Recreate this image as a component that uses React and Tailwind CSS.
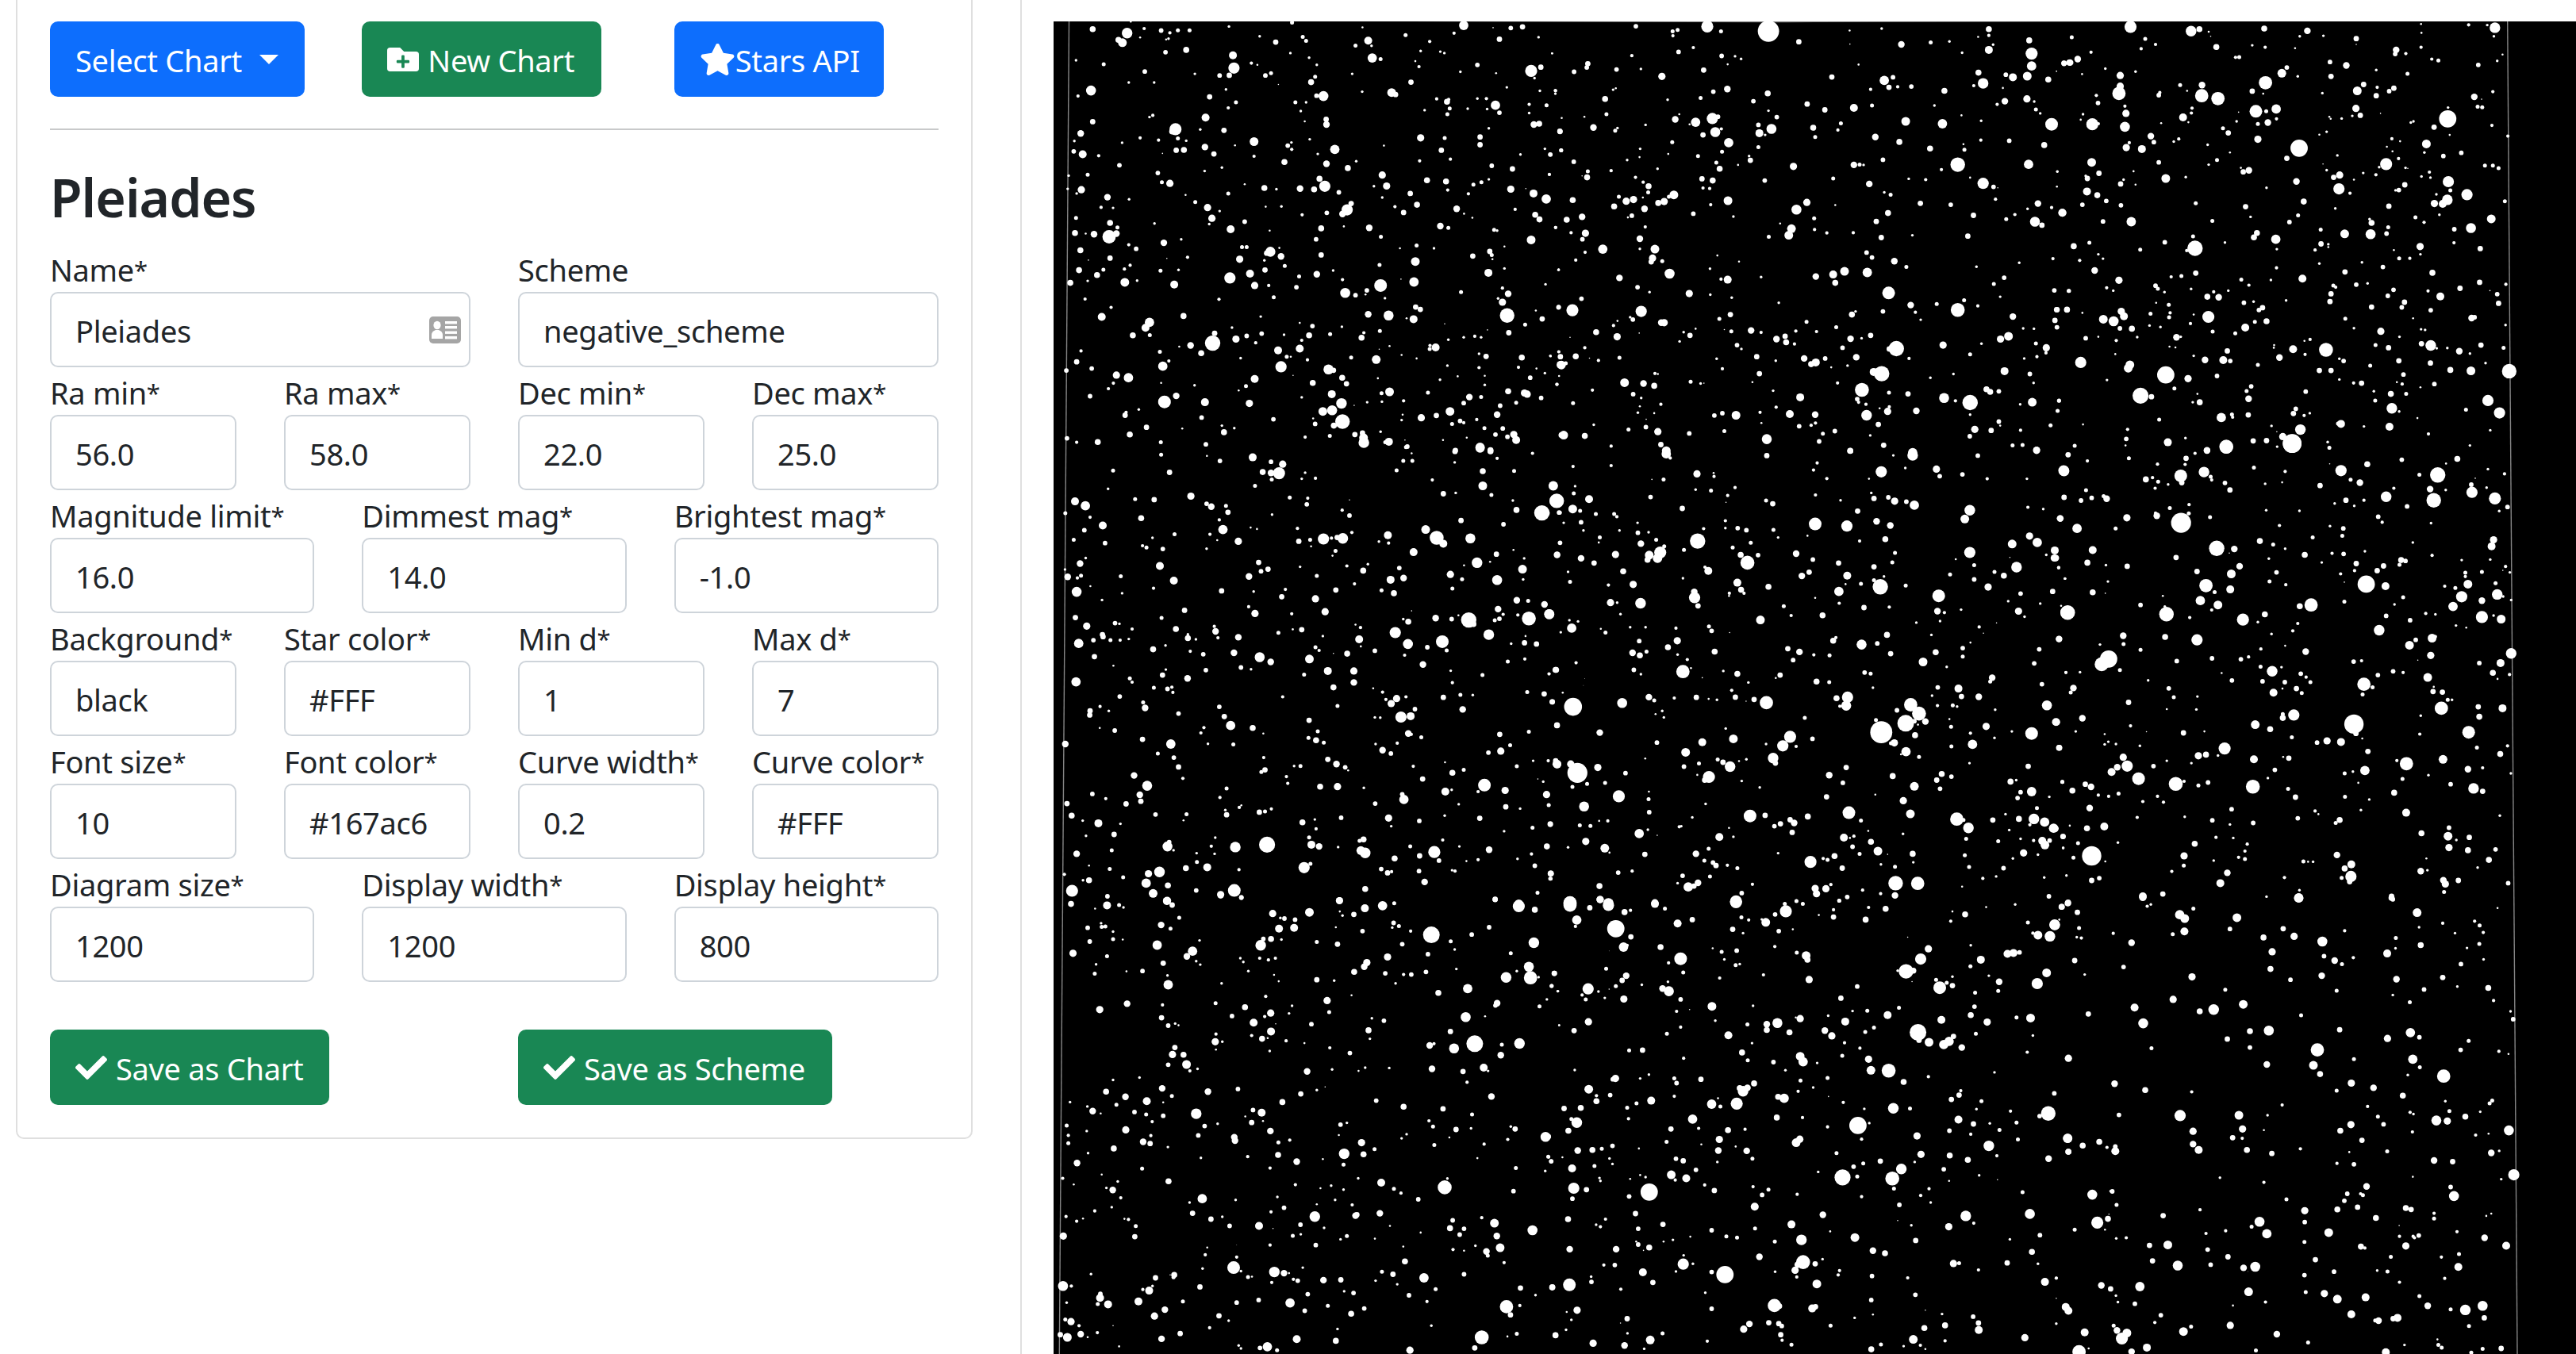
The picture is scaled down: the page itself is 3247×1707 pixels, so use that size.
import React from "react";
import { FaFolderPlus, FaStar, FaCheck } from "react-icons/fa";

// Star catalogue, split in sky tiles. Each star is a triple: x, y, radius.
const W = 1568;
const TILES = [
  { x: 1310, y: 0, w: 660, h: 570, stars: [
    263,115,16,237,138,9,249,148,13,160,101,9,314,99,5,365,106,7,391,114,5,415,105,6,450,105,6,387,134,4,380,137,3,302,130,3,378,181,7,440,173,9,110,209,4,193,223,6,316,248,7,268,286,4,344,286,4,155,314,15,116,333,5,160,422,8,124,463,10,105,489,4,103,525,7,130,535,12,178,540,5,248,495,4,302,478,5,340,400,5,330,406,4,357,486,5,408,448,18,398,456,9,415,480,6,440,488,4,410,521,8,433,520,9,369,532,2,240,573,7,355,600,7,145,606,6,88,609,4,85,655,4,126,658,11,112,671,4,367,632,6,391,636,11,204,684,10,185,719,5,221,721,4,269,691,4,110,756,6,212,773,9,234,789,6,209,821,20,231,810,10,164,812,10,107,808,9,139,810,3,345,775,4,373,842,10,425,830,4,268,849,5,290,863,7,123,868,9,147,902,2,212,895,8,272,920,5,255,933,5,192,935,6,119,937,9,173,954,9,145,974,4,256,979,13,293,973,4,93,981,9,363,939,6,417,936,4,444,892,5,382,896,2,404,987,12,137,1037,5,215,1066,5,187,1099,12,432,1096,9,330,1118,14,318,1137,12,331,1162,6,280,1163,9,125,1217,5,112,1255,8,157,1278,7,81,1285,7,231,1301,11,267,1310,14,222,1329,5,207,1348,5,152,1374,7,370,1270,14,388,1252,5,361,1220,6,419,1202,3,453,1198,10,365,1328,3,375,1394,19,410,1373,10,298,1420,4,257,1440,8,260,1430,5,321,1482,8,271,1507,9,83,1520,7,112,1534,5,175,1533,9,364,1534,6,428,1486,3,
    274,75,3,568,92,4,757,78,6,660,126,4,708,146,8,789,128,6,799,142,6,580,192,12,583,236,17,569,261,8,540,262,7,635,219,5,653,225,3,694,254,6,677,262,7,752,184,4,808,200,4,831,225,4,826,266,6,814,285,9,716,293,2,466,256,4,510,336,8,559,310,4,589,355,6,566,374,5,498,408,12,553,452,8,482,449,4,496,510,10,523,534,8,586,504,3,643,491,13,643,542,5,547,581,4,495,593,4,851,333,15,830,332,7,767,355,6,799,355,4,783,385,4,795,421,3,859,414,8,860,432,10,744,505,7,755,494,4,756,518,5,810,483,4,834,534,4,734,562,9,885,518,14,860,568,10,924,583,9,949,559,4,839,620,9,855,646,17,823,657,9,897,667,7,781,654,10,674,652,9,710,656,4,615,639,3,566,671,6,438,676,3,467,701,6,504,720,11,540,732,4,517,757,11,509,777,4,615,769,7,573,795,12,678,717,3,725,716,4,787,745,5,861,738,7,934,706,8,922,728,17,908,742,10,844,792,9,912,785,3,829,830,7,690,800,3,607,857,6,621,857,6,600,899,11,692,873,15,681,878,8,719,860,3,724,889,10,735,922,6,674,903,4,676,936,8,844,884,8,880,938,4,831,951,10,778,959,6,770,996,7,571,964,17,631,949,12,645,990,11,687,990,5,702,1031,6,538,1038,5,663,1098,4,577,1136,4,525,1156,8,519,1190,23,485,1225,9,589,1176,11,621,1165,7,666,1157,7,648,1189,5,733,1161,4,715,1215,12,780,1209,12,786,1180,5,808,1163,9,818,1131,7,780,1120,3,724,1272,17,741,1237,6,753,1237,3,803,1248,5,603,1242,4,465,1336,4,645,1314,12,619,1339,6,597,1354,3,496,1395,12,629,1399,11,760,1302,2,786,1378,4,819,1328,9,486,1448,7,701,1454,7,547,1476,4,553,1499,9,584,1485,4,499,1541,7,796,1516,5,826,1470,7,820,1451,3,
    968,95,3,985,141,12,995,159,4,947,158,6,997,201,14,1022,205,6,1097,122,6,1142,177,4,1169,144,5,1137,231,5,1126,212,3,937,256,4,1113,285,8,967,318,4,1055,321,13,1067,328,8,1271,88,14,1242,115,5,1201,179,4,1213,184,4,1261,249,4,1312,225,7,1359,96,2,1378,136,8,1412,97,7,1447,93,8,1495,129,4,1536,185,3,1473,246,18,1502,233,8,1483,271,4,1368,254,3,1400,303,4,1499,315,4,1546,315,5,1366,365,14,1378,391,7,1339,342,5,1312,342,4,1341,378,4,1190,343,5,1221,353,9,1226,345,5,1229,376,6,1222,396,6,1154,382,4,1283,377,4,1467,362,5,1467,392,4,1519,365,6,1481,432,10,1497,429,9,1559,455,8,1346,445,4,1320,475,8,1320,502,8,1214,479,6,1142,478,11,1204,521,8,1231,552,5,1139,558,5,1032,505,3,1441,536,4,1514,516,4,1530,536,6,1563,521,6,1355,575,7,1417,586,8,1528,605,4,1027,607,11,1040,645,11,1002,646,4,1161,625,9,1111,671,8,1131,710,9,1091,737,8,1065,717,5,1027,685,4,1218,629,9,1223,659,5,1300,640,6,1324,632,6,1346,622,4,1285,672,5,1250,724,10,1272,741,3,1297,755,3,1412,656,11,1425,726,5,1457,654,2,1480,671,12,1518,690,14,1485,745,9,1498,761,9,1546,789,5,1473,832,13,1393,855,3,1362,797,6,1371,800,4,1201,784,10,1225,790,6,988,790,10,1023,821,6,1130,851,6,1080,861,3,1182,861,4,1126,907,13,1122,978,14,1083,968,2,1019,919,6,1298,888,8,1349,872,8,1355,884,6,1357,899,3,1345,946,12,1393,931,4,1022,990,19,981,1007,7,977,1021,3,947,1024,7,916,1016,15,908,970,5,1035,1034,4,985,1090,10,1046,1094,15,1127,1065,8,1141,1073,8,1121,1107,12,1100,1104,3,906,1133,4,1020,1148,6,972,1154,5,965,1171,9,871,1159,6,1009,1247,13,934,1240,6,1018,1211,2,1049,1200,3,1085,1231,3,1130,1243,3,1263,1013,6,1404,1019,10,1387,999,5,1387,1048,11,1374,1035,4,1401,1094,22,1455,1126,6,1406,1154,8,1506,1106,8,1487,1077,3,1555,1066,7,1516,986,4,1555,936,4,1214,1123,2,1342,1144,2,1225,1178,4,1187,1205,12,1169,1210,6,1170,1198,5,1271,1170,4,1304,1166,5,1323,1170,4,1317,1227,4,1338,1236,8,1317,1275,5,1222,1268,4,1445,1240,9,1435,1274,5,1489,1278,3,1531,1235,4,1561,1237,7,1561,1265,12,1556,1220,5,1514,1294,4,1470,1310,7,1334,1303,3,1334,1335,4,1253,1305,3,1200,1317,4,1164,1362,6,1049,1359,13,1025,1364,6,1014,1312,3,982,1395,4,1026,1393,4,1091,1390,5,943,1406,2,866,1281,15,881,1284,8,907,1310,9,920,1331,8,876,1367,12,905,1399,16,877,1423,15,849,1427,13,908,1462,22,882,1476,9,945,1507,8,968,1502,8,972,1535,16,971,1518,13,1022,1497,4,1047,1532,12,1036,1534,6,870,1512,6,1085,1457,4,1088,1438,3,1144,1449,11,1189,1441,8,1230,1427,13,1288,1377,10,1271,1398,7,1323,1377,6,1404,1357,9,1453,1363,11,1461,1367,11,1503,1380,7,1428,1397,6,1380,1407,7,1371,1438,10,1310,1455,5,1388,1486,7,1366,1507,7,1421,1507,11,1428,1526,12,1402,1515,7,1333,1485,6,1260,1460,7,1271,1466,5,1236,1470,6,1320,1551,14,1351,1561,9,1246,1562,8,1209,1526,3,1280,1518,3,1098,1551,6,1095,1526,2,1564,1509,9,1550,1333,5] },
  { x: 1950, y: 0, w: 660, h: 570, stars: [
    266,91,7,376,109,6,391,104,6,377,124,5,480,92,18,521,109,6,663,108,32,754,145,8,438,165,5,394,180,7,523,194,7,563,195,4,581,204,4,541,223,3,254,193,5,281,239,4,208,241,7,122,221,8,119,234,7,81,249,7,15,185,3,25,314,5,25,325,4,174,343,9,178,396,6,198,311,4,206,306,3,344,265,11,469,243,8,540,309,10,498,318,7,460,340,6,361,346,4,112,405,3,139,442,10,44,409,3,39,456,8,42,521,6,10,536,7,80,561,7,7,605,5,295,433,4,211,444,4,204,453,6,384,414,10,396,396,3,445,424,14,427,431,3,495,411,17,512,405,7,504,458,15,522,447,5,467,468,8,375,493,6,544,495,14,524,526,6,452,541,6,363,534,3,279,516,4,277,545,3,240,555,4,192,592,5,331,585,4,265,615,5,288,632,5,304,646,9,303,667,6,122,594,6,120,615,9,105,610,2,464,620,8,496,626,9,517,585,9,507,564,6,572,572,3,605,541,4,609,556,8,467,652,5,487,654,5,652,626,7,542,696,13,490,710,5,438,741,7,558,751,4,380,676,13,365,682,6,351,699,11,333,704,9,259,692,11,237,698,11,215,682,6,292,724,10,287,685,3,201,716,9,254,748,7,242,754,3,77,694,9,105,752,10,59,762,9,294,787,5,278,828,10,278,863,4,323,864,13,316,895,11,312,908,8,345,906,6,367,949,15,26,789,5,72,807,5,115,809,11,106,830,7,167,864,14,114,875,5,86,902,5,35,935,4,217,964,10,271,996,7,307,1013,4,426,1018,11,489,1022,4,553,1032,4,521,968,5,541,970,12,488,932,4,510,886,3,575,907,3,641,961,4,694,1050,4,76,1076,18,35,1065,7,103,1036,7,282,1080,17,257,1108,7,249,1100,4,211,1113,3,342,1119,10,351,1119,11,199,1129,5,147,1152,9,210,1168,11,276,1155,2,69,1170,2,113,1206,5,86,1236,9,40,1237,8,35,1220,4,10,1234,4,43,1266,13,56,1260,6,154,1250,5,127,1242,2,217,1241,6,36,1304,3,30,1333,5,136,1353,5,409,1152,4,445,1140,3,428,1163,8,397,1184,4,516,1106,6,549,1091,8,531,1143,2,552,1149,6,611,1146,10,641,1153,5,569,1197,7,582,1210,4,508,1244,4,525,1279,5,628,1237,8,685,1251,4,636,1296,8,323,1295,5,332,1297,3,232,1327,13,289,1330,10,321,1338,9,258,1367,7,282,1380,4,278,1409,3,272,1431,4,321,1433,3,341,1402,5,430,1324,6,460,1330,4,470,1329,2,615,1325,3,677,1355,4,78,1398,6,140,1473,4,244,1490,6,297,1454,2,296,1481,7,332,1497,11,341,1542,8,50,1509,13,113,1512,9,192,1547,5,426,1503,7,501,1441,7,525,1433,7,566,1440,13,531,1495,6,638,1430,5,642,1467,3,686,1412,5,658,1523,15,357,1563,13,
    618,351,7,661,324,9,663,384,4,688,406,7,672,447,15,633,433,7,636,462,12,653,468,4,633,510,6,738,577,11,779,361,8,832,381,8,853,267,8,797,443,9,803,475,6,880,428,6,871,451,5,906,106,3,1002,99,4,907,153,2,933,224,3,1061,154,10,1149,147,6,1205,144,4,1243,183,4,1291,128,3,1323,101,9,1323,123,5,1336,155,4,1323,173,12,1444,140,9,1451,186,18,1451,229,14,1438,264,13,1395,268,12,1374,259,7,1365,305,3,1501,276,9,1548,219,8,1564,217,9,1526,247,2,1010,279,14,1036,268,7,1024,303,8,1050,301,5,1091,300,7,969,310,5,973,366,6,919,374,12,1190,315,9,1160,366,4,1292,252,9,1306,289,16,1278,297,5,1371,351,10,1348,362,5,1437,343,11,1459,352,4,1464,380,6,1477,393,4,1511,431,19,1489,503,9,1384,488,7,1300,419,4,1241,400,3,1299,486,5,1184,429,14,1074,421,13,1055,492,9,983,475,10,1147,515,9,1247,500,3,1250,519,6,1230,571,22,1181,588,5,1306,636,17,1267,616,3,1337,648,7,1350,651,2,1442,570,14,1528,595,4,1527,647,3,919,572,10,936,571,6,948,572,4,1006,554,7,857,619,6,965,638,10,1083,620,4,1134,623,5,1010,667,4,1029,675,6,1343,691,5,1118,705,8,1209,710,7,778,702,11,863,711,3,747,727,15,800,757,6,801,796,5,838,808,5,732,793,13,724,816,13,698,775,3,664,821,6,917,807,5,986,768,8,1021,739,9,1001,824,8,1094,816,4,1277,747,8,1260,819,8,1375,760,6,1401,744,5,1439,724,4,1470,706,10,1511,720,5,1461,769,15,1482,781,8,1543,738,12,957,876,7,973,893,7,1040,906,10,1076,926,6,959,945,14,891,941,13,857,952,12,863,981,9,805,959,10,1023,1016,19,1089,1058,10,1103,1083,5,1119,1109,4,1006,1080,7,1167,1054,6,1230,1075,21,1249,1041,6,1290,1061,5,1286,925,4,1414,911,4,1515,897,5,1369,963,7,1338,985,6,1357,1029,4,1519,1007,7,1562,1009,6,1526,1074,8,1557,1074,9,1521,1111,8,1527,1135,7,1395,1098,10,1426,1139,4,1458,1140,4,913,1091,9,924,1080,4,777,1116,6,866,1135,6,745,1148,5,807,1150,5,713,1166,8,687,1176,10,716,1187,9,741,1193,5,909,1175,10,885,1206,7,942,1173,4,969,1163,8,1046,1209,23,1025,1210,8,770,1243,10,833,1243,7,805,1257,12,791,1263,9,851,1274,3,926,1239,10,900,1268,4,1084,1243,5,1186,1197,11,1267,1229,6,1301,1192,4,1358,1176,11,1382,1166,13,1464,1191,6,1495,1206,11,1494,1224,5,1467,1237,5,1429,1243,4,1370,1287,12,1446,1297,7,1457,1328,4,1217,1297,4,1148,1310,4,1002,1296,23,978,1290,12,943,1352,21,929,1384,7,933,1395,5,955,1402,5,870,1328,5,1024,1362,6,1081,1366,8,758,1378,12,1189,1380,15,1223,1390,5,1267,1396,23,1267,1438,4,1316,1350,9,1327,1359,9,1353,1357,7,1453,1395,13,1417,1402,4,1533,1390,6,1529,1425,6,727,1436,12,803,1438,10,755,1478,7,804,1467,5,791,1475,5,862,1495,7,826,1504,6,815,1531,7,957,1440,16,1020,1427,11,1025,1411,5,996,1416,3,1106,1425,10,992,1472,8,968,1510,4,1008,1544,8,1353,1462,7,1357,1476,3,1281,1489,11,1266,1513,7,1330,1493,8,1418,1492,5,1508,1475,6,1394,1545,6,1424,1543,6,1466,1560,10,1095,1570,14,908,1563,9] },
  { x: 2590, y: 0, w: 657, h: 570, stars: [
    228,93,18,51,129,6,272,135,6,303,154,5,260,169,5,109,181,5,69,205,10,46,217,10,28,220,8,5,247,2,82,257,3,152,238,4,243,248,4,410,108,16,435,101,9,463,110,3,469,126,2,486,163,9,594,157,4,630,99,9,633,164,5,723,167,3,737,126,4,760,107,10,808,124,4,907,134,8,907,154,2,555,198,6,544,199,5,698,234,7,683,254,13,731,265,4,634,287,20,594,316,8,627,325,3,197,262,11,197,299,11,193,324,20,125,331,5,130,357,7,211,368,5,214,393,11,211,440,15,215,512,11,224,495,5,262,517,12,113,431,18,131,429,5,85,396,4,78,415,3,313,330,7,316,321,5,377,295,6,398,315,3,443,295,10,442,332,20,491,342,20,413,375,5,411,392,5,386,407,12,402,424,3,320,427,3,289,472,10,298,493,7,373,482,5,358,491,4,506,445,6,522,461,8,547,421,4,553,389,2,605,386,19,636,386,6,666,378,14,667,412,5,641,425,10,611,430,6,611,483,11,735,514,26,698,549,8,460,502,4,488,555,6,463,571,4,527,529,3,111,563,13,133,601,8,98,619,8,93,610,4,8,595,3,97,664,12,128,677,9,155,697,7,83,710,7,23,738,12,198,638,8,207,623,4,237,594,3,243,640,3,199,712,7,313,563,7,334,619,13,394,614,4,424,705,6,560,582,3,567,596,8,584,591,10,637,651,4,727,629,10,749,699,9,732,747,6,706,770,7,574,717,8,589,752,4,145,768,7,230,769,14,104,842,6,57,854,9,75,903,5,131,882,4,145,897,4,120,938,10,257,866,6,331,840,7,416,820,6,422,861,23,397,869,5,474,766,6,512,841,4,599,823,9,608,808,9,665,830,14,668,864,4,193,972,11,156,998,5,176,1008,4,43,1009,6,0,1008,5,7,1074,8,37,1074,8,83,1085,3,7,1135,6,146,1107,13,177,1114,15,200,1080,11,208,1097,12,196,1139,7,232,1140,9,248,1169,4,185,1181,5,131,1168,3,93,1173,7,182,1228,3,303,991,7,310,1001,6,330,1013,4,350,960,5,381,957,6,424,947,8,410,1002,4,305,1050,3,343,1057,6,347,1085,5,344,1100,6,288,1088,6,285,1129,4,318,1134,4,366,1170,10,379,1168,4,345,1202,3,363,1205,3,408,1122,5,418,1091,3,462,1099,18,475,1150,6,459,1029,9,493,1031,10,478,1012,5,522,1008,4,561,970,6,584,989,5,650,971,4,667,929,5,745,966,12,696,1042,4,598,1046,4,569,1050,7,625,1067,8,614,1075,7,602,1116,6,637,1114,9,573,1136,12,543,1156,6,78,1257,17,157,1318,4,226,1265,13,221,1277,13,334,1300,26,401,1313,11,360,1347,6,258,1372,24,291,1376,8,13,1389,6,8,1425,5,418,1234,4,452,1248,10,519,1217,8,507,1249,12,528,1252,7,611,1265,6,488,1304,7,660,1197,3,659,1206,3,676,1240,10,717,1211,12,768,1177,5,751,1182,3,753,1229,5,577,1356,6,591,1340,7,583,1383,10,429,1366,3,415,1395,4,436,1395,9,582,1439,8,501,1448,14,533,1437,6,535,1447,5,314,1455,6,219,1489,5,215,1522,7,213,1545,3,85,1472,3,60,1546,6,340,1534,12,393,1519,4,516,1549,21,458,1562,10,755,1358,7,725,1418,7,718,1434,8,750,1441,5,767,1433,4,739,1490,16,652,1477,4,668,1497,2,686,1514,11,714,1538,28,669,1549,4,637,1528,8,597,1529,8,
    1102,83,3,1103,114,3,1102,164,5,1245,86,5,1301,87,4,1324,96,16,1321,126,4,1347,189,3,1331,211,4,1027,173,10,1024,187,7,1056,186,5,877,227,10,828,215,7,831,265,8,967,243,4,1061,256,6,1134,205,5,1154,210,6,1274,225,7,805,323,4,910,315,13,929,293,8,970,303,5,967,332,8,1006,316,7,1020,306,8,1318,318,5,1262,336,10,1284,344,2,1272,370,6,1286,372,6,906,376,11,919,400,8,895,402,4,863,411,4,826,405,3,830,412,3,818,457,4,796,467,3,980,393,2,1182,412,26,1183,373,4,1141,441,8,1071,425,4,1079,421,4,1315,435,5,1188,468,3,1118,499,13,1014,481,5,1039,490,3,999,509,3,1016,525,3,1112,529,4,1169,541,7,1223,530,7,1363,472,5,850,539,4,997,569,18,1034,550,5,976,580,4,1055,582,4,1062,584,2,966,606,5,928,600,4,818,590,4,807,569,2,839,615,8,857,607,11,900,623,3,855,655,17,888,670,5,1103,612,4,1127,597,5,1130,616,4,1184,630,17,1190,660,6,1148,674,4,1181,693,16,1167,707,12,1142,706,11,1240,675,17,1294,574,6,1318,574,6,1335,583,6,1354,698,6,1313,759,13,1252,791,15,1202,795,7,1201,842,5,1157,745,4,1111,771,5,1085,754,6,1005,715,8,1035,659,7,1053,641,8,1025,660,4,844,723,4,800,796,6,801,846,8,823,847,4,823,857,3,783,867,5,872,811,13,950,812,15,953,773,9,947,760,4,1003,788,6,998,810,7,1099,855,11,1100,882,4,1280,862,8,1020,867,3,1036,896,6,1068,896,5,1136,946,9,987,926,7,924,910,4,873,943,8,796,914,4,907,987,7,941,983,4,838,990,6,845,996,5,831,1019,8,828,1046,8,953,1065,8,1002,1026,7,1019,1005,7,1052,1048,8,1044,1066,7,1123,1009,5,1160,1028,12,1131,1076,7,1219,1000,8,1278,979,8,1309,1008,2,1331,1020,7,1357,986,5,1335,1052,8,1254,1103,10,1263,1100,7,1356,1127,4,1078,1104,3,1114,1144,4,1102,1142,4,874,1105,6,900,1138,4,981,1149,11,1037,1168,4,1103,1192,8,1131,1198,16,1149,1208,4,1181,1207,4,965,1197,6,1004,1206,8,1035,1251,8,816,1213,21,856,1244,4,869,1252,7,949,1268,6,796,1285,8,831,1285,8,856,1316,4,899,1328,5,923,1329,8,960,1357,4,964,1389,6,1282,1197,8,1350,1206,6,1217,1218,10,1249,1226,4,1296,1259,4,1130,1259,8,1190,1283,9,1252,1286,13,1367,1287,22,1049,1299,7,1029,1325,3,1045,1332,5,1011,1366,9,1057,1366,6,1142,1332,7,1100,1343,3,1014,1416,16,1036,1427,4,1007,1480,12,1303,1389,17,1338,1432,17,1237,1421,6,1091,1450,3,861,1470,12,852,1469,6,930,1479,4,1124,1505,5,1310,1492,4,1249,1545,4,821,1533,4,826,1553,5] },
  { x: 1310, y: 560, w: 660, h: 580, stars: [
    365,36,6,221,90,6,390,96,8,206,152,4,107,195,12,138,210,14,152,249,5,78,235,6,135,293,7,190,277,12,103,326,6,197,337,7,287,187,6,344,189,8,305,252,9,339,319,4,309,346,5,321,352,6,370,357,7,405,307,6,454,177,11,501,203,7,515,213,10,559,210,6,565,232,8,539,258,5,550,291,14,511,307,5,533,327,3,596,331,11,501,356,4,541,57,7,502,40,3,639,45,12,694,60,7,729,68,11,718,99,18,694,98,10,669,95,9,696,120,6,646,142,6,786,118,4,796,97,4,827,116,5,750,182,6,804,184,5,801,205,7,697,240,4,633,284,3,652,289,3,773,287,5,777,331,8,811,326,6,814,348,3,851,323,17,875,320,5,909,321,16,892,318,8,936,301,5,887,364,6,878,380,3,929,243,7,907,225,5,929,190,2,139,388,4,122,407,10,125,448,6,114,456,5,85,452,10,77,427,4,112,503,15,153,484,3,244,450,6,248,508,4,188,531,4,361,415,12,403,465,12,342,491,5,435,566,8,366,592,6,409,630,9,108,591,8,142,620,11,118,679,14,189,649,8,191,656,8,162,668,7,227,610,7,240,612,4,278,630,5,213,668,6,242,668,5,268,664,4,165,724,8,222,755,3,341,699,9,378,686,4,445,661,9,445,648,4,469,665,4,452,706,5,491,716,7,524,621,5,528,638,10,535,660,5,596,658,10,583,711,10,604,761,7,634,767,4,499,770,7,444,798,10,369,787,8,379,768,4,343,830,6,384,834,7,397,828,5,400,846,5,271,798,6,278,811,5,110,810,14,241,860,7,311,880,6,317,899,10,182,894,5,152,909,8,151,923,8,208,909,4,417,918,7,181,967,3,226,976,7,309,1006,8,394,1022,14,355,1054,6,403,1068,7,417,1100,8,430,1139,5,78,1022,10,284,1129,10,323,1164,15,301,1195,10,304,1217,8,159,1192,7,199,1208,5,260,1226,8,83,1225,8,97,1266,9,130,1283,4,177,1292,12,243,1294,4,348,1262,7,224,1330,8,140,1335,4,112,1396,10,217,1384,6,149,1436,3,211,1448,6,251,1476,6,131,1486,4,149,1486,9,75,1466,5,98,1522,18,204,1541,7,327,1464,11,360,1458,16,320,1496,14,341,1531,13,385,1504,9,383,1556,12,384,1371,15,389,1356,7,402,1384,4,657,403,8,664,433,7,685,426,8,628,451,10,642,502,4,737,495,5,726,520,8,827,527,11,888,497,8,831,449,6,781,418,4,921,415,5,984,409,4,970,431,9,944,476,5,646,577,11,627,554,5,756,578,5,856,571,11,546,500,8,716,643,6,759,631,3,786,632,8,849,654,4,660,726,15,693,742,10,827,692,6,838,703,5,809,732,13,881,713,2,922,714,9,958,665,12,962,625,5,947,615,3,963,689,3,864,773,12,942,773,11,942,812,10,881,829,9,793,785,6,729,861,5,893,892,6,808,941,8,834,979,6,806,1001,6,829,1009,9,852,1017,6,539,895,7,554,928,8,573,959,14,639,967,9,671,986,3,493,966,5,484,984,5,505,1021,4,581,1023,6,672,1068,5,676,1110,8,665,1117,6,740,1133,5,744,1156,5,763,1097,4,782,1097,6,864,1074,8,890,1090,10,916,1101,7,925,1112,3,841,1167,9,893,1167,11,972,1171,4,561,1173,6,541,1204,5,599,1238,5,605,1231,3,557,1247,4,561,1263,8,659,1254,8,676,1252,6,695,1243,5,441,1261,6,432,1282,3,788,1289,9,825,1279,4,829,1311,5,904,1273,7,527,1341,4,515,1370,5,525,1396,4,471,1394,4,472,1424,6,503,1442,12,439,1445,9,587,1373,16,682,1365,24,598,1450,5,470,1521,7,543,1535,11,584,1521,19,605,1545,7,808,1340,6,815,1365,12,838,1371,10,793,1443,17,812,1430,6,895,1373,4,971,1347,9,959,1352,6,963,1385,13,976,1393,16,899,1555,10,976,1516,9,
    1090,57,6,1117,57,6,1102,8,7,1115,31,3,1070,89,6,1245,25,8,1244,62,4,1177,122,5,1210,169,8,1247,166,4,1328,92,9,1328,142,13,1354,173,6,1263,260,8,1390,273,7,1418,192,4,1429,224,9,1422,91,6,1477,31,5,1371,48,5,1351,24,9,1320,13,14,1539,142,14,1548,193,20,1505,234,23,1559,233,6,1044,310,12,1046,337,5,1017,332,4,1157,291,13,1190,319,21,1210,339,12,1291,321,15,1311,404,16,1350,401,3,1272,413,3,1121,368,12,1369,375,8,1420,360,3,1452,389,4,1447,426,13,1449,461,4,1551,377,9,1371,463,15,1078,422,7,1052,462,12,1091,456,10,1025,498,6,1062,508,9,1231,444,11,1266,460,6,1237,492,6,1430,532,10,1464,534,6,1513,546,10,1527,579,15,1466,594,21,1433,582,5,1374,562,10,1389,580,5,1378,595,7,1364,600,6,1286,599,23,1300,613,9,1255,583,3,1235,596,7,1187,593,10,1105,605,9,1090,596,4,1115,568,2,1066,642,17,1104,681,15,1162,692,7,1207,673,19,1220,703,6,1094,719,5,1005,704,7,1346,649,16,1413,680,4,1453,677,8,1489,681,8,1456,654,3,1403,741,6,1454,732,5,1327,787,6,1149,751,10,1232,772,4,1237,813,5,1000,832,3,1028,845,5,1038,870,5,1070,867,11,1054,884,11,1098,861,5,1125,903,7,1083,930,17,1112,927,12,1005,931,4,1021,932,4,1210,863,8,1261,854,6,1298,855,4,1268,904,10,1461,845,6,1512,851,8,1536,878,8,1527,783,4,1546,769,9,1550,958,8,1466,980,6,1379,989,8,1105,986,10,1114,989,5,1144,999,6,1007,1022,4,1072,1019,5,1028,1043,10,1053,1054,7,1120,1098,5,1148,1141,8,1410,1026,6,1382,1046,11,1345,1051,7,1271,1110,6,1237,1120,9,1215,1084,3,1430,1098,6,1479,1079,4,1524,1079,5,1550,1090,13,1333,1162,19,1314,1184,5,1395,1180,11,1397,1236,8,1440,1242,4,1519,1194,11,1509,1150,4,1493,1141,2,1526,1230,5,1216,1184,12,1235,1178,4,1256,1227,4,1214,1266,4,1319,1275,8,1092,1211,14,1087,1193,7,1006,1225,7,1046,1274,11,1054,1302,4,1138,1284,7,1530,1295,8,1477,1307,6,1392,1319,4,1208,1349,5,1258,1371,4,1183,1390,18,1197,1419,7,1139,1403,8,1111,1371,6,1064,1412,9,1024,1448,7,1043,1461,8,1055,1457,5,1137,1455,7,1154,1492,10,1236,1452,4,1245,1455,5,1279,1421,3,1314,1416,5,1347,1382,10,1432,1413,4,1484,1437,7,1474,1397,5,1520,1371,9,1532,1463,9,1530,1481,6,1492,1529,6,1365,1552,8,1436,1568,14] },
  { x: 1950, y: 560, w: 660, h: 580, stars: [
    357,33,14,369,47,5,192,73,5,78,76,5,349,120,6,314,120,2,449,101,11,499,98,3,500,110,5,445,155,4,491,158,6,563,148,5,541,175,5,658,39,8,536,198,2,656,192,6,676,203,8,809,64,5,798,88,5,838,117,5,804,173,5,879,191,4,908,23,9,1001,94,17,1095,38,16,1037,38,4,1073,81,4,964,118,3,1166,85,11,1176,109,7,1244,103,7,1290,39,7,1318,118,5,1466,21,11,1437,118,4,1547,90,16,19,142,13,29,193,22,77,221,13,84,143,4,80,168,6,126,187,12,99,227,6,146,238,6,36,233,7,102,266,7,50,268,4,0,235,8,310,180,7,201,238,6,209,247,5,271,268,4,272,302,7,217,294,4,109,294,4,158,318,6,155,335,3,39,336,7,30,377,10,102,389,10,141,405,8,205,376,11,281,339,10,327,326,6,304,300,4,405,219,8,451,330,23,469,288,5,410,360,6,339,369,18,331,389,14,306,378,13,301,394,9,351,348,6,534,261,5,534,286,4,571,286,7,597,293,7,610,336,6,556,352,6,580,377,9,600,404,21,632,378,7,678,292,6,692,318,4,746,373,10,796,393,7,803,272,19,780,312,3,898,279,17,930,228,8,936,330,5,971,166,4,979,185,8,1022,181,7,1041,194,11,1076,196,7,1100,208,14,987,263,10,1028,277,10,1013,324,9,1042,370,6,1034,403,6,979,418,8,873,405,8,1266,225,16,1251,255,13,1266,369,17,1224,392,3,1279,412,6,1207,444,6,1279,461,7,1386,386,2,1340,435,6,1393,340,13,1445,313,11,1468,335,14,1520,362,10,1519,388,11,1537,253,10,1549,181,7,1440,215,5,1486,221,4,1495,377,4,1406,419,16,1368,448,9,1532,421,5,1551,458,4,1514,502,8,1321,487,11,1418,509,7,1381,535,4,1477,543,4,1412,569,11,1430,588,4,1558,574,21,63,435,4,69,469,6,184,480,5,228,433,9,258,478,11,190,540,11,210,540,4,280,542,16,220,579,4,7,579,15,74,627,14,93,604,4,67,600,4,41,641,4,175,642,6,161,629,3,249,624,4,295,624,4,386,627,5,407,457,4,483,432,12,473,419,5,442,523,17,441,503,10,452,551,8,570,472,12,581,496,9,590,508,5,546,508,5,545,517,3,663,486,9,763,449,10,785,436,8,899,448,12,894,477,3,874,502,14,875,542,5,940,476,6,998,486,23,979,464,6,1009,451,4,1074,482,6,949,557,8,1025,555,5,825,583,9,803,524,3,709,552,6,731,584,5,639,599,13,1173,517,19,1169,569,10,1190,574,5,1240,564,4,1106,608,4,1177,603,4,1294,623,5,1346,609,2,1307,644,2,1268,676,3,1018,650,9,1151,650,4,1533,664,9,1474,699,7,1459,747,7,276,671,7,256,711,10,278,720,9,298,707,6,362,692,9,390,670,11,391,717,4,420,734,5,485,621,6,493,636,7,502,707,9,547,642,2,260,769,7,281,784,4,87,745,5,27,769,9,6,783,5,47,847,3,16,878,8,78,895,27,225,882,15,113,799,1,109,822,1,407,775,20,431,763,3,465,796,2,528,773,4,570,783,9,603,812,4,553,839,5,564,862,8,596,876,2,620,870,8,657,881,20,698,787,8,685,797,3,721,697,8,756,708,10,737,736,7,799,718,5,846,720,6,857,670,9,865,659,5,807,809,9,845,811,6,942,683,15,989,679,7,1029,714,8,951,778,7,969,782,6,976,830,4,1164,709,9,1126,742,13,1197,759,4,1245,695,7,1245,724,6,1170,829,7,1153,857,4,1169,891,5,1232,833,12,1241,860,8,1293,861,10,1333,796,10,1327,809,6,1482,818,7,1554,778,5,1497,890,15,1215,890,6,1228,894,4,1342,905,4,1205,937,3,1210,963,6,1315,962,11,1268,985,5,1340,1001,4,1392,979,4,1451,986,19,1524,947,12,1534,1035,9,1274,1023,14,1211,1030,6,1265,1087,4,1441,1098,8,305,862,10,321,873,6,381,865,5,447,863,8,484,868,3,509,871,4,345,909,4,350,931,4,325,920,3,329,1017,7,535,969,4,558,1004,13,465,1016,12,415,1050,13,455,1088,6,410,1099,7,511,1075,6,527,1084,8,548,1099,16,597,1074,4,575,1080,3,485,1134,18,472,1145,8,450,1127,3,583,1148,4,728,997,18,706,1028,17,677,1070,16,684,1087,8,656,1022,4,746,1030,5,795,1004,7,772,933,6,867,866,9,900,862,17,896,891,15,877,893,5,1089,888,20,1114,918,21,1074,951,25,1100,944,7,1133,945,10,1048,907,7,1111,956,3,1001,982,33,985,940,6,1040,1018,11,1030,1019,6,1102,992,9,1075,1048,14,1060,1057,3,1114,1066,6,158,983,10,30,958,9,31,1091,12,26,1079,8,91,1120,30,71,1090,11,152,1102,11,235,1121,7,174,1154,6,120,1158,6,76,1168,6,294,1071,3,215,1200,18,111,1235,15,5,1230,6,10,1295,8,98,1299,6,130,1301,6,156,1284,3,182,1284,5,304,1210,6,306,1254,7,305,1184,3,475,1226,4,435,1272,4,276,1327,14,302,1314,4,330,1333,2,402,1302,4,396,1304,5,516,1339,12,558,1338,4,545,1308,3,173,1377,13,187,1392,3,116,1354,11,63,1374,4,293,1398,8,446,1396,10,484,1379,6,471,1419,6,497,1426,7,506,1436,8,540,1435,5,570,1445,6,608,1267,19,653,1265,8,637,1170,4,845,1128,10,896,1102,8,886,1154,7,837,1202,8,781,1269,9,728,1280,8,740,1291,10,699,1294,8,681,1302,7,734,1323,8,904,1256,19,940,1283,6,983,1194,3,1035,1131,9,1100,1166,13,1067,1215,11,1088,1260,13,1182,1124,9,1167,1145,8,1211,1133,7,1177,1174,7,1066,1328,4,962,1318,3,889,1341,12,919,1336,5,907,1342,3,970,1355,9,915,1372,7,991,1387,13,1020,1398,2,936,1396,6,861,1404,9,840,1417,6,827,1412,5,789,1424,18,692,1394,4,884,1445,8,1000,1432,4,1042,1440,6,1095,1396,9,1097,1425,4,1388,1150,9,1405,1145,4,1418,1186,7,1409,1206,7,1451,1184,14,1504,1202,4,1543,1151,6,1467,1240,6,1373,1261,4,1335,1281,8,1413,1277,9,1458,1277,16,1446,1297,5,1490,1288,14,1517,1309,14,1545,1337,8,1384,1315,4,1351,1353,6,1418,1345,4,1457,1351,5,1483,1352,12,1505,1351,7,1491,1366,13,1227,1278,20,1247,1281,6,1262,1308,16,1255,1345,6,1251,1401,6,1264,1441,6,1367,1445,7,1427,1393,11,1395,1412,4,1470,1399,4,1546,1376,4,1305,1480,5,1345,1473,4,1489,1477,4,1243,1508,3,1503,1541,7,213,1460,7,255,1455,5,157,1506,9,11,1463,9,11,1481,6,69,1563,20,159,1552,11,184,1565,16,323,1563,11,423,1509,14,452,1495,10,440,1506,8,406,1471,7,488,1473,6,391,1496,4,615,1500,5,583,1530,7,566,1558,18,803,1514,11,807,1532,11,835,1515,11,850,1501,5,899,1543,7,875,1556,6,945,1520,5,999,1532,5,1044,1496,22,1110,1497,20,1042,1538,10,747,1557,6] },
  { x: 2590, y: 560, w: 657, h: 580, stars: [
    516,10,20,458,22,10,422,31,5,395,48,8,392,69,5,379,108,19,382,131,8,449,95,16,469,111,6,472,122,5,512,132,7,527,156,8,714,-2,28,599,80,6,633,135,4,684,130,3,693,93,5,798,141,8,826,12,6,827,67,2,861,90,17,890,121,6,918,131,10,940,68,9,876,191,8,930,191,5,842,202,4,901,210,4,997,179,16,1020,150,5,1060,212,7,1044,53,7,1097,104,6,1152,105,23,1129,153,10,1140,191,22,1176,156,4,1177,66,3,1211,50,9,1265,116,2,1253,138,7,1255,164,17,1299,148,4,1324,185,18,1303,85,4,1353,101,5,1362,214,7,1337,228,4,40,36,8,28,91,16,98,57,5,223,48,6,309,68,5,274,120,9,294,114,5,311,128,6,302,150,5,341,137,4,28,181,8,94,157,6,79,192,7,111,183,7,156,186,10,147,177,6,217,251,11,16,253,10,67,287,14,183,287,6,307,244,10,303,235,5,346,218,6,404,206,5,403,236,6,380,268,30,467,249,6,487,355,23,540,357,10,525,371,2,617,330,9,657,342,6,693,356,4,644,390,4,676,277,5,636,225,4,736,227,4,776,318,6,752,377,9,803,403,4,834,372,5,869,374,7,865,312,6,868,287,7,828,279,4,973,247,7,985,266,5,1132,269,4,1077,335,4,933,365,4,907,407,8,902,431,5,860,442,5,989,415,8,970,431,8,1042,395,9,1055,398,7,1037,411,6,1135,379,5,937,477,26,995,484,12,871,470,2,1048,522,6,871,537,6,1022,546,4,997,585,7,976,634,16,1320,326,11,1314,348,12,1310,393,4,1356,417,5,1348,430,2,1369,437,4,1224,395,4,1285,435,6,1235,438,6,1235,451,5,1243,477,13,1173,484,5,1205,490,6,1224,520,17,1198,553,14,1326,474,6,1331,512,16,1349,519,4,1373,531,4,1285,533,10,1285,589,18,1320,584,4,1343,596,13,1207,618,4,1238,625,3,1069,600,7,1116,577,5,1145,580,4,0,362,12,3,388,10,12,421,5,31,458,4,114,361,12,98,404,9,154,412,4,218,416,8,160,468,4,114,505,9,152,508,2,365,386,8,428,434,8,455,482,20,438,533,14,481,504,6,472,565,5,491,548,13,531,442,13,556,416,10,528,495,12,566,598,18,611,606,4,632,580,9,646,468,6,667,437,7,695,479,5,737,552,9,771,548,20,731,611,5,716,636,5,652,647,4,39,574,22,19,551,3,258,548,7,336,579,22,331,553,4,325,517,3,406,591,5,206,653,10,207,681,6,136,683,4,258,701,6,13,664,10,332,657,9,428,667,17,162,732,26,141,750,21,196,770,6,33,778,4,76,777,4,56,831,10,48,846,6,281,805,4,343,832,7,358,862,6,367,739,7,473,730,7,502,780,3,533,805,7,560,733,7,583,725,5,620,698,5,693,687,3,755,707,10,619,758,6,654,774,16,682,760,4,625,808,7,692,811,7,685,833,3,658,847,12,727,833,8,743,848,6,740,782,7,756,794,5,769,811,6,899,741,7,923,738,5,930,818,20,956,829,6,926,853,6,972,787,7,1018,774,7,1048,778,5,1067,685,13,1086,667,7,1135,661,13,1145,656,5,1131,720,11,1092,736,2,1122,795,13,1138,843,8,1166,845,8,1140,827,3,1182,871,6,1195,871,4,1163,900,20,1101,925,4,1373,713,16,1341,746,12,1277,746,7,1318,779,9,1332,800,3,1368,785,5,1274,895,8,1277,929,9,1347,900,12,1245,982,19,1098,988,5,222,880,8,83,934,10,228,960,5,5,947,11,13,1035,9,63,979,4,150,988,3,150,1023,4,161,1014,4,184,1022,4,256,1028,4,276,980,2,337,903,3,429,860,4,426,904,4,387,984,8,450,979,3,511,1037,18,491,1061,4,432,1062,11,455,1058,9,411,1087,4,337,1079,4,297,1097,7,206,1067,11,218,1097,17,188,1101,10,171,1117,12,252,1140,19,364,1158,21,389,1149,5,432,1163,6,461,1153,7,23,1151,6,53,1181,9,92,1159,8,109,1168,10,131,1196,5,162,1200,5,192,1191,6,265,1218,5,309,1200,5,327,1220,5,105,1240,10,248,1272,5,149,1303,12,97,1309,9,45,1300,3,2,1310,10,25,1337,8,70,1360,6,25,1376,4,190,1358,4,111,1403,29,152,1422,3,56,1409,6,35,1470,4,111,1487,8,134,1479,7,265,1541,12,325,1533,8,40,1562,9,603,956,13,648,971,9,719,923,17,686,933,9,686,920,6,713,999,6,599,1074,12,687,1066,3,704,1070,8,662,1110,7,641,1138,4,596,1167,21,702,1175,6,724,1203,8,789,1017,7,819,1011,11,861,1015,12,900,954,29,906,986,8,925,1003,3,942,1047,8,933,1112,14,897,1116,4,872,1122,6,913,1154,3,873,1202,6,946,1211,4,921,1247,4,1029,1078,5,1058,1089,20,1046,1141,6,1021,1188,9,1057,1256,12,1168,1074,13,1124,1128,4,1191,1159,7,1270,1034,6,1362,1028,5,1340,1056,9,1243,1108,10,1287,1103,5,1372,1122,4,1260,1173,16,1287,1183,8,1339,1266,4,1186,1307,7,1183,1336,13,1208,1349,4,1186,1375,11,1247,1340,8,1243,1384,9,1103,1326,9,1326,1381,7,1306,1417,9,1272,1443,4,1118,1412,3,1101,1455,10,1121,1452,4,1169,1486,10,1175,1499,11,1214,1487,8,1171,1526,6,1364,1496,7,391,1270,4,474,1282,7,532,1244,7,527,1296,4,597,1291,7,485,1340,5,537,1342,4,579,1363,5,572,1387,5,572,1414,6,553,1408,5,478,1419,4,421,1362,9,389,1403,11,388,1436,6,352,1456,5,519,1461,10,498,1496,12,783,1250,5,793,1261,3,731,1275,7,845,1291,6,857,1281,9,849,1400,10,892,1432,12,872,1446,9,863,1478,6,891,1473,17,887,1491,8,748,1422,6,762,1423,3,777,1423,4,691,1477,5,736,1520,4,734,1546,14,637,1542,4,1013,1546,9,1017,1552,6] },
  { x: 1310, y: 1130, w: 660, h: 577, stars: [
    95,26,9,167,42,3,203,31,12,239,30,6,252,38,4,382,16,12,398,30,8,419,73,6,145,108,7,185,92,4,187,105,6,198,103,6,221,121,4,221,147,6,250,148,3,151,155,7,101,195,11,203,205,6,170,233,4,166,265,6,261,257,3,309,256,7,365,98,10,393,111,6,353,167,14,371,229,8,384,271,4,386,303,14,459,188,14,442,206,10,480,151,4,470,222,4,482,234,4,181,388,11,263,368,10,369,372,5,366,416,8,386,443,7,407,436,4,417,442,3,406,518,8,399,542,11,432,543,9,386,577,7,441,576,13,451,598,5,474,591,4,300,621,4,221,629,4,200,669,9,258,687,10,231,714,6,322,702,12,368,658,10,397,684,6,371,706,3,92,705,4,144,720,4,160,736,10,184,744,3,285,739,7,320,747,6,371,752,7,338,772,5,82,785,6,87,819,5,87,846,6,142,804,4,259,800,11,311,841,10,332,847,8,334,820,5,385,859,4,223,864,9,146,880,4,113,914,10,308,933,6,187,953,3,235,977,4,387,976,9,70,966,5,103,987,3,201,999,4,220,1006,10,244,1033,5,217,1065,4,166,1078,5,80,1097,5,112,1113,5,131,1104,3,267,1107,5,255,1105,3,289,1130,6,286,1166,8,72,1164,11,470,745,16,495,787,7,476,819,7,534,779,4,584,825,10,586,837,10,484,896,4,488,1036,14,450,1049,4,459,1086,8,514,1106,8,548,1098,4,570,1129,7,588,1040,4,503,1203,3,497,1228,5,489,1275,4,582,1272,19,591,1236,5,604,1284,4,625,1304,6,637,1303,3,591,1194,1,155,1294,4,348,1307,8,404,1297,9,402,1305,6,392,1297,2,329,1351,12,310,1347,5,339,1335,4,297,1388,12,481,1338,8,71,1335,15,96,1335,5,182,1376,12,183,1362,7,175,1397,6,206,1398,12,82,1392,4,345,1438,11,376,1416,10,430,1388,6,78,1450,6,95,1457,11,119,1471,5,63,1502,8,84,1511,13,124,1500,10,145,1510,3,174,1495,5,221,1471,2,239,1542,3,366,1516,10,422,1498,8,538,1437,8,567,1454,4,510,1478,5,597,1539,4,604,1549,4,591,1392,7,657,1383,7,661,1547,7,683,1543,14,712,1555,6,
    543,-3,9,605,4,7,699,59,11,722,74,4,734,76,7,766,80,7,718,111,12,763,108,12,809,55,13,663,168,16,671,146,7,694,146,9,725,148,4,831,156,6,893,164,8,888,106,3,899,15,11,900,52,3,908,66,4,942,62,8,975,41,12,1028,32,14,1063,24,6,968,119,7,602,212,4,611,225,4,660,212,5,686,218,5,707,212,5,626,256,4,703,269,3,717,291,3,546,298,4,528,366,6,577,410,7,616,380,9,678,343,5,757,375,4,748,401,4,831,286,8,883,289,4,862,357,11,868,397,6,935,339,3,642,433,12,675,412,5,693,400,11,694,463,12,636,477,5,667,488,9,684,486,3,690,530,4,739,495,5,794,503,3,708,437,2,815,438,7,870,519,5,930,537,7,529,472,5,527,498,11,548,498,4,529,525,3,802,600,10,877,593,4,856,653,2,831,664,4,783,677,8,728,705,9,595,660,7,505,669,10,640,732,7,666,741,12,670,770,3,636,775,8,617,754,3,692,804,10,716,843,6,750,835,5,715,886,9,624,892,5,691,931,5,771,909,10,849,900,3,902,782,7,921,776,4,897,818,3,965,844,11,971,884,9,913,882,16,911,919,6,1004,866,6,955,966,4,1024,981,12,1062,1002,6,1083,1017,5,767,988,5,842,1000,3,874,991,4,911,1005,4,886,1040,4,937,1057,5,713,1030,4,733,1067,7,694,1081,5,658,1129,12,782,1125,7,783,1158,4,759,1163,6,700,1138,2,831,1055,3,825,1097,16,853,1136,4,947,1094,10,951,1091,8,1020,1086,10,921,1164,6,902,1175,4,1050,1129,3,1005,1173,3,691,1195,5,828,1195,7,704,1287,16,733,1291,10,748,1291,3,789,1272,4,696,1323,5,761,1312,5,774,1317,7,851,1315,10,903,1314,8,913,1353,4,941,1359,7,804,1363,7,751,1393,14,795,1420,7,864,1403,6,934,1430,9,973,1412,7,893,1482,4,888,1523,9,771,1517,12,1007,1317,4,1026,1286,6,1059,1295,8,1072,1329,4,1095,1251,9,1107,1367,7,1110,1555,11,
    1061,91,7,1077,102,6,1057,107,4,1112,119,5,1174,132,25,1087,164,7,1164,198,7,1232,154,6,1244,182,4,1295,131,7,1347,106,7,1365,10,8,1436,34,18,1484,46,9,1412,195,6,1481,159,16,1466,241,15,1471,279,20,1495,277,4,1430,256,4,1398,278,16,1542,264,8,1534,307,6,1553,325,4,1520,353,4,1498,377,6,1043,208,11,1036,264,7,981,227,11,973,241,10,943,259,9,1091,268,5,1114,268,7,1158,259,7,1067,298,4,1195,331,9,1283,316,14,1249,249,4,1371,366,10,1366,374,7,1277,414,15,1335,411,3,1231,463,8,1304,505,25,1242,521,15,1169,511,10,1182,505,5,1385,508,6,1382,544,10,1438,504,16,1331,587,12,1344,598,4,1269,600,8,1176,591,10,1281,637,5,996,418,4,1032,426,7,986,459,9,990,488,4,976,587,4,956,598,3,1048,588,4,1354,686,10,1209,728,8,1296,747,6,1248,799,8,1293,795,4,1167,769,5,1179,789,6,1183,852,6,1228,826,3,1332,849,5,1403,833,5,1425,797,8,1412,789,4,1516,824,15,1557,442,3,1091,721,9,1009,700,7,1100,815,4,1085,829,4,1312,897,3,1214,997,21,1222,967,4,1427,931,6,1524,892,6,1533,908,7,1515,941,4,1420,1010,7,1135,1038,7,1477,1144,15,1325,1101,5,1363,1120,13,1370,1164,10,1380,1204,13,1392,1255,5,1339,1217,10,1343,1231,6,1306,1197,4,1238,1110,7,1230,1137,9,1272,1139,7,1259,1159,7,1142,1152,3,1090,1200,3,1239,1210,5,1272,1214,3,1272,1295,7,1152,1307,14,1187,1346,6,1161,1388,5,1441,1342,8,1486,1366,4,1536,1340,9,1399,1406,20,1411,1434,8,1439,1402,5,1174,1471,4,1325,1511,21,1304,1547,8,1430,1499,6,1402,1508,3,1546,1504,9] },
  { x: 1950, y: 1130, w: 660, h: 577, stars: [
    69,30,20,128,39,8,159,11,11,184,31,17,89,81,14,85,103,5,206,111,26,232,54,9,250,48,5,251,139,8,229,174,14,240,168,5,323,26,12,353,42,6,391,93,12,435,80,8,340,174,9,400,214,19,408,261,6,364,228,5,186,187,1,177,248,6,237,272,10,225,288,8,206,308,6,186,318,2,284,303,4,154,326,4,123,317,17,105,338,5,116,353,6,173,348,4,230,352,11,22,264,8,14,307,6,32,325,4,362,293,4,346,316,10,365,325,15,400,353,7,388,394,5,427,388,2,400,448,5,359,471,6,124,430,11,81,460,8,36,442,3,494,377,13,504,426,4,543,476,12,566,20,18,582,72,6,604,81,5,655,89,13,643,79,4,683,62,7,715,51,18,712,26,6,747,16,5,766,26,6,814,64,3,858,71,8,858,46,5,875,15,6,556,113,8,587,126,4,694,119,7,736,113,3,682,172,5,748,193,6,776,203,13,780,217,9,785,285,11,648,269,5,523,190,6,568,186,7,496,178,3,531,216,4,565,236,6,577,232,4,517,280,5,954,80,9,963,38,5,1014,43,9,1080,140,2,929,309,7,880,349,8,915,393,4,959,392,6,842,409,4,893,429,12,1020,407,12,1054,382,6,1142,180,11,1119,215,17,1075,257,22,1097,255,9,1050,255,4,1093,292,2,1176,313,19,1165,286,6,1197,296,6,1214,306,8,1214,275,4,1282,330,6,1299,217,12,1268,240,6,1269,168,4,1252,62,9,1209,85,5,1214,52,3,1315,37,3,1402,28,4,1541,36,9,1559,24,9,1520,97,16,1534,80,3,1506,137,16,1470,133,13,1455,126,5,1440,90,6,1379,197,12,1397,194,12,1415,192,7,1496,262,13,1468,299,17,1354,293,10,1351,324,6,1323,272,4,758,419,11,745,415,3,690,434,15,726,466,9,658,438,10,658,458,9,600,439,6,617,375,4,614,503,4,584,535,9,601,562,6,678,568,7,714,596,4,758,548,13,767,567,14,809,571,4,832,460,10,853,478,11,891,502,5,884,546,6,937,520,5,953,465,6,979,450,6,963,558,11,970,596,13,1023,597,21,1068,636,9,1111,466,25,1114,493,8,1144,500,13,1188,508,14,1204,497,14,1217,480,8,1242,518,10,1181,423,12,1269,407,9,1280,378,7,1284,471,6,1318,431,11,1406,415,6,1448,417,13,1455,477,4,1438,534,5,1561,555,9,1142,618,5,1340,603,4,1519,675,7,246,528,6,286,527,8,83,595,4,409,555,5,305,611,4,279,624,4,205,624,11,197,627,7,381,624,6,388,640,7,461,627,8,381,685,5,125,661,13,148,683,5,148,702,9,189,681,7,51,727,8,101,725,9,89,775,16,73,763,6,64,803,9,240,724,6,268,709,6,312,700,12,244,762,5,436,763,14,493,712,14,519,720,6,512,692,3,568,710,18,587,668,16,577,657,9,600,656,10,620,641,9,710,692,14,692,687,9,688,758,9,759,631,6,752,668,5,797,655,4,840,622,6,843,686,2,765,758,5,840,790,5,887,706,5,950,728,4,931,785,26,965,777,4,942,832,5,1037,726,16,1087,727,6,1108,821,11,1211,696,8,1234,681,8,1239,666,5,1286,729,4,1301,702,6,1232,765,12,1277,780,8,1205,803,7,1269,815,5,1326,778,4,1355,800,6,1388,736,5,1406,775,6,1410,833,6,1501,744,22,1475,753,7,1559,829,14,1561,875,9,1502,899,10,1323,855,16,1347,889,5,1260,903,9,1206,888,9,1120,884,11,1101,910,4,1188,935,7,1294,956,4,1349,971,2,1204,975,3,1424,1014,6,1061,934,16,1034,967,21,1039,1001,6,998,907,8,947,915,6,918,926,7,929,960,6,885,963,24,867,880,6,812,944,4,942,1029,5,1055,1057,7,1119,1025,5,1144,1002,5,1149,1049,4,371,797,8,454,795,5,542,801,9,593,798,5,516,833,11,513,871,10,462,850,3,358,841,6,565,857,3,598,872,10,615,899,6,510,910,4,757,832,11,746,844,13,4,823,8,92,871,10,136,869,9,164,865,6,196,855,7,275,864,3,187,898,4,196,917,4,142,924,6,75,932,12,12,908,6,5,893,5,46,894,3,80,1000,17,118,1005,8,76,1036,7,157,965,4,160,975,4,249,968,3,279,955,3,295,962,4,306,1013,26,246,1028,7,372,954,13,384,972,5,417,966,12,446,937,7,386,899,7,408,906,8,472,989,5,501,1008,8,617,995,5,663,1005,6,644,1023,7,622,1063,12,749,1021,5,732,1124,12,826,1091,10,848,1148,3,762,1177,16,922,1169,13,1091,1127,4,1050,1111,2,1104,1179,8,1203,1132,11,1254,1095,16,1278,1120,5,1446,1088,15,1476,1161,7,1386,1175,4,1452,1218,9,265,1087,8,175,1106,5,147,1125,4,160,1132,5,63,1106,9,347,1124,8,273,1139,7,267,1183,3,273,1193,7,306,1203,9,289,1213,2,349,1183,3,377,1177,4,429,1166,3,493,1144,7,537,1165,6,569,1169,6,623,1138,6,682,1183,6,207,1209,10,68,1209,10,170,1263,5,203,1263,7,408,1260,17,437,1259,4,409,1230,4,386,1285,4,287,1288,12,317,1323,8,493,1287,7,533,1296,26,132,1303,4,133,1321,7,67,1331,19,16,1339,9,221,1346,5,636,1235,10,683,1286,4,767,1253,21,751,1262,10,743,1281,11,748,1304,5,803,1259,8,825,1243,4,808,1328,13,876,1282,5,872,1297,5,976,1214,10,1012,1223,9,973,1301,7,1080,1307,5,1217,1258,11,1234,1257,6,1292,1280,5,1378,1256,8,1470,1259,4,1491,1321,12,1525,1308,5,1103,1365,7,971,1383,7,474,1358,4,681,1402,20,696,1404,8,794,1412,12,804,1406,8,493,1413,7,90,1418,11,59,1424,3,73,1451,4,57,1485,4,25,1503,8,138,1531,11,240,1447,8,220,1462,2,241,1497,4,309,1520,13,346,1497,6,232,1539,10,291,1550,4,606,1465,10,589,1483,11,664,1461,8,694,1464,8,703,1472,7,700,1502,8,704,1521,5,732,1536,6,849,1471,6,921,1444,4,976,1433,3,1133,1418,2,1183,1431,4,1192,1470,9,1130,1479,9,1097,1518,13,1118,1538,5,1068,1541,4,1000,1535,6,971,1552,9,1133,1551,3,1276,1440,7,1292,1462,8,1293,1486,12,1192,1523,5,1431,1512,11,1525,1464,4,1553,1407,11,1562,1421,9,1525,1377,2,480,1524,5] },
  { x: 2590, y: 1130, w: 657, h: 577, stars: [
    21,36,9,40,24,9,68,55,8,0,98,16,73,109,6,66,140,4,80,143,5,176,127,5,231,159,10,265,4,11,278,34,5,289,28,4,376,63,14,391,76,13,390,120,12,355,130,6,417,42,6,548,73,13,527,112,7,628,141,9,687,111,8,720,137,11,734,6,14,654,190,11,649,249,9,709,286,7,805,155,15,810,205,7,842,220,10,864,232,6,898,210,5,803,272,10,872,118,5,848,323,6,60,220,8,90,268,4,207,242,7,413,276,11,356,353,11,240,381,12,266,435,15,101,403,8,436,394,9,478,388,16,513,320,6,567,370,13,519,489,8,587,462,9,587,518,7,644,460,15,741,408,6,291,520,6,41,555,11,638,576,10,790,526,20,778,579,13,798,609,9,857,457,8,900,558,6,892,640,11,959,656,10,848,666,6,941,720,5,180,642,10,272,664,9,412,670,5,193,749,7,377,751,17,416,805,11,416,849,10,433,869,12,554,750,13,565,797,11,535,827,8,564,829,5,578,869,9,653,881,8,640,750,4,684,715,5,629,801,3,739,865,5,39,829,14,41,875,9,84,854,9,134,841,9,157,860,5,182,857,7,182,873,12,497,964,4,629,980,5,697,1038,6,752,1077,11,752,1116,7,751,1184,6,113,1022,15,173,1011,7,168,1010,4,186,1057,6,128,1118,18,160,1105,9,163,1089,2,151,1142,3,60,1142,6,185,1172,4,215,1170,5,326,1094,8,437,1074,5,455,1155,5,514,1146,5,616,1115,15,592,1132,6,638,1156,14,285,1196,8,340,1194,13,460,1210,7,370,1265,15,294,1249,8,469,1262,7,521,1235,8,568,1273,10,603,1269,15,581,1285,1,784,1245,8,751,1298,7,755,1356,6,811,1361,11,850,1380,13,840,1286,7,256,1337,14,140,1333,10,168,1345,8,184,1368,4,190,1390,4,241,1396,7,5,1308,4,33,1407,12,41,1420,12,583,1355,13,634,1390,5,536,1402,3,319,1435,7,301,1460,5,90,1494,12,177,1471,6,187,1487,10,202,1515,18,217,1496,13,387,1491,13,410,1474,6,528,1470,11,668,1500,10,762,1529,6,605,1556,6,73,1560,20,102,1549,3,231,1560,10,277,1546,12,
    1013,0,8,1017,10,7,1090,56,13,1096,106,4,1026,143,6,1025,178,4,1000,196,12,1101,167,9,1167,92,5,1204,126,4,1263,85,5,1278,100,6,1289,124,5,1277,163,6,1240,177,4,1290,216,4,1222,232,7,1332,40,3,1028,284,10,1017,338,4,1068,363,6,1111,319,7,1167,278,8,1211,309,4,1304,314,9,1320,357,5,1371,394,4,1379,421,7,1365,540,3,1336,531,5,1245,495,6,1221,526,7,1070,467,14,1097,483,7,1001,487,11,1077,558,14,1098,586,6,1062,612,4,1170,616,20,1047,683,9,1175,702,4,1187,736,6,1148,768,15,1181,770,11,1235,755,9,1280,738,4,1308,709,6,1316,700,6,1366,802,15,1069,740,5,1079,746,4,1076,807,5,972,755,6,989,781,7,891,782,11,859,803,9,924,836,8,886,876,3,849,915,5,900,918,7,1000,874,6,1266,818,5,1305,813,3,1313,879,10,1337,872,4,1141,905,10,1197,909,8,1077,961,3,1381,954,17,1343,969,4,1191,996,7,1201,1027,15,938,994,10,920,1019,5,927,1024,6,880,1019,7,871,1043,7,850,1073,9,911,1065,8,966,1102,9,1056,1068,9,1072,1073,8,1141,1086,5,1141,1104,6,1313,1087,3,1298,1095,3,1036,1128,2,1037,1165,5,1095,1162,7,1078,1165,5,1082,1170,5,1056,1198,11,1210,1149,5,1293,1170,10,1358,1197,12,824,1152,13,921,1200,9,933,1205,5,1011,1235,6,1216,1226,6,1163,1236,5,1214,1270,12,1173,1309,5,970,1282,4,1001,1285,6,1037,1322,5,935,1374,12,892,1432,12,1097,1370,6,1122,1403,10,1191,1415,6,1235,1417,16,1287,1403,15,1292,1444,8,1246,1472,6,1031,1444,12,1018,1447,8,974,1454,10,964,1453,6,1151,1518,3,1154,1537,6,1164,1546,6,1052,1537,4,996,1562,12,1253,1563,6,1287,1550,6,1343,1549,8] },
];

function StarChart() {
  const circles = [];
  TILES.forEach((t, ti) => {
    for (let i = 0; i < t.stars.length; i += 3) {
      circles.push(
        <circle
          key={ti + "-" + i}
          cx={(t.x + (t.stars[i] * t.w) / W).toFixed(1)}
          cy={(t.y + (t.stars[i + 1] * t.h) / W).toFixed(1)}
          r={(t.stars[i + 2] * 0.42).toFixed(1)}
        />
      );
    }
  });
  return (
    <svg viewBox="1328 27 1919 1680" className="block h-[1680px] w-[1919px] bg-black">
      <g fill="none" stroke="#858585" strokeWidth="1.4">
        <path d="M1347.5 27Q1342 700 1335.3 1707" />
        <path d="M3160.7 27Q3166 700 3173 1707" />
        <path d="M1700 26.4Q2250 28.8 2800 26.4" strokeWidth="1.1" />
      </g>
      <g fill="#fff">{circles}</g>
    </svg>
  );
}

function Field({ label, value, card }) {
  const required = label.endsWith("*");
  return (
    <label className="block min-w-0">
      <span className="block h-[60px] whitespace-nowrap leading-[64px]">
        {required ? label.slice(0, -1) : label}
        {required && <span className="align-[3px] text-[31px] leading-none">*</span>}
      </span>
      <span className="flex h-[95px] items-center justify-between rounded-[10px] border-2 border-[#ced4da] pl-[30px] pr-[10px]">
        <span className="pt-[4px]">{value}</span>
        {card && <ContactCard />}
      </span>
    </label>
  );
}

function ContactCard() {
  return (
    <svg viewBox="0 0 40 34" className="h-[34px] w-[40px]">
      <rect width="40" height="34" rx="5" fill="#a5a5a5" />
      <g fill="#fff">
        <ellipse cx="10" cy="11" rx="4.6" ry="5.2" />
        <path d="M3 28v-5q0-4 5-6h4q5 2 5 6v5z" />
        <rect x="20" y="6" width="15" height="3.4" />
        <rect x="20" y="12" width="15" height="3.4" />
        <rect x="20" y="18.5" width="15" height="3.4" />
        <rect x="20" y="25" width="15" height="3.4" />
      </g>
    </svg>
  );
}

const FOUR = "grid grid-cols-4 gap-x-[60px]";
const THREE = "grid grid-cols-3 gap-x-[60px]";
const TWO = "grid grid-cols-2 gap-x-[60px]";
const BTN = "flex h-[95px] items-center whitespace-nowrap rounded-[10px] pl-[32px] text-white";

export default function App() {
  return (
    <div className="flex h-[1707px] w-[3247px] overflow-hidden bg-white font-['Noto_Sans',sans-serif] text-[38px] tracking-[-0.3px] text-[#212529]">
      <aside className="w-[1286px] shrink-0 pl-[20px]">
        <div className="h-[1436px] w-[1206px] rounded-b-[10px] border-2 border-t-0 border-[#dfdfdf] px-[41px] pt-[27px]">
          <div className={THREE}>
            <button className={BTN + " w-[321px] bg-[#0d6efd]"}>
              <span className="pt-[4px]">Select Chart</span>
              <svg viewBox="0 0 24 12" className="ml-[22px] h-[12px] w-[24px]" fill="#fff"><path d="M0 0h24L12 12z" /></svg>
            </button>
            <button className={BTN + " w-[302px] bg-[#198754]"}>
              <FaFolderPlus className="mr-[11px] size-[40px]" />
              <span className="pt-[4px]">New Chart</span>
            </button>
            <button className={BTN + " w-[264px] bg-[#0d6efd]"}>
              <FaStar className="h-[40px] w-[45px]" />
              <span className="pt-[4px]">Stars API</span>
            </button>
          </div>
          <hr className="my-[40px] h-[2px] border-0 bg-[#c8c9ca]" />
          <h3 className="mb-[20px] h-[84px] text-[66px] font-semibold leading-[89px] tracking-[-1px]">Pleiades</h3>
          <div className={TWO}>
            <Field label="Name*" value="Pleiades" card />
            <Field label="Scheme" value="negative_scheme" />
          </div>
          <div className={FOUR}>
            <Field label="Ra min*" value="56.0" />
            <Field label="Ra max*" value="58.0" />
            <Field label="Dec min*" value="22.0" />
            <Field label="Dec max*" value="25.0" />
          </div>
          <div className={THREE}>
            <Field label="Magnitude limit*" value="16.0" />
            <Field label="Dimmest mag*" value="14.0" />
            <Field label="Brightest mag*" value="-1.0" />
          </div>
          <div className={FOUR}>
            <Field label="Background*" value="black" />
            <Field label="Star color*" value="#FFF" />
            <Field label="Min d*" value="1" />
            <Field label="Max d*" value="7" />
          </div>
          <div className={FOUR}>
            <Field label="Font size*" value="10" />
            <Field label="Font color*" value="#167ac6" />
            <Field label="Curve width*" value="0.2" />
            <Field label="Curve color*" value="#FFF" />
          </div>
          <div className={THREE}>
            <Field label="Diagram size*" value="1200" />
            <Field label="Display width*" value="1200" />
            <Field label="Display height*" value="800" />
          </div>
          <div className={TWO + " pt-[60px]"}>
            <button className={BTN + " w-[352px] bg-[#198754]"}>
              <FaCheck className="mr-[11px] size-[40px]" />
              <span className="pt-[4px]">Save as Chart</span>
            </button>
            <button className={BTN + " w-[396px] bg-[#198754]"}>
              <FaCheck className="mr-[11px] size-[40px]" />
              <span className="pt-[4px]">Save as Scheme</span>
            </button>
          </div>
        </div>
      </aside>
      <main className="h-full flex-1 border-l-2 border-[#dfdfdf] pl-[40px] pt-[27px]">
        <StarChart />
      </main>
    </div>
  );
}
